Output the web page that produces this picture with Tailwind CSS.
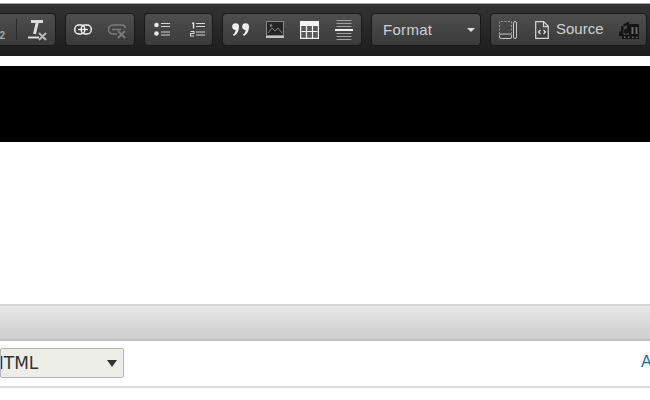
<!DOCTYPE html>
<html lang="en">
<head>
  <meta charset="UTF-8">
  <title>Editor</title>
  <script src="https://cdn.jsdelivr.net/npm/@tailwindcss/browser@4"></script>
</head>
<body class="w-[650px] h-[400px] overflow-hidden bg-white font-['Liberation_Sans',Arial,sans-serif]">
  <!-- toolbar -->
  <div class="mt-[3px] h-[53px] border-t border-[#a8a8a8] bg-gradient-to-b from-[#333333] to-[#1c1c1c] pt-[9px] pr-[3px] flex justify-end gap-[9px] overflow-hidden">
    <!-- subscript / clear format -->
    <div class="shrink-0 w-[120px] h-[33px] rounded-[4px] border border-[#181818] bg-gradient-to-b from-[#4e4e4e] to-[#3a3a3a] flex items-center justify-end pr-[8px]">
      <span class="mt-[13px] mr-[11px] text-[10px] leading-none font-bold text-[#a8a8a8]">2</span>
      <span class="w-px h-[21px] bg-[#2a2a2a] mr-[11px]"></span>
      <svg class="w-[19px] h-[22px]" viewBox="0 0 19 22" fill="none">
        <path d="M3 2.500h12M9.500 2.500 6.500 15" stroke="#dcdcdc" stroke-width="3"/>
        <path d="M0 18.500h11" stroke="#e8e8e8" stroke-width="1.800"/>
        <path d="M11 14l7 7M18 14l-7 7" stroke="#b8b8b8" stroke-width="2"/>
      </svg>
    </div>

    <!-- link / unlink -->
    <div class="shrink-0 w-[70px] h-[33px] rounded-[4px] border border-[#181818] bg-gradient-to-b from-[#4e4e4e] to-[#3a3a3a] flex items-start pt-[10px] pl-[8px] gap-[16px]">
      <svg class="w-[18px] h-[11px]" viewBox="0 0 18 11" fill="none" stroke="#f2f2f2" stroke-width="1.500">
        <rect x=".8" y="1" width="10" height="9" rx="4"/>
        <rect x="7.200" y="1" width="10" height="9" rx="4"/>
        <path d="M4 5.500h10" stroke-width="1.200"/>
      </svg>
      <svg class="w-[19px] h-[15px]" viewBox="0 0 19 15" fill="none" stroke="#7c7c7c" stroke-width="1.500">
        <path d="M9 10H5a4 4 0 0 1 0-9h9a4 4 0 0 1 3.500 3M4 5.500h9"/>
        <path d="M10 7l7 7M17 7l-7 7" stroke-width="1.800"/>
      </svg>
    </div>

    <!-- lists -->
    <div class="shrink-0 w-[69px] h-[33px] rounded-[4px] border border-[#181818] bg-gradient-to-b from-[#4e4e4e] to-[#3a3a3a] flex items-center pl-[9px] gap-[20px]">
      <svg class="w-[16px] h-[15px]" viewBox="0 0 16 15" fill="none">
        <circle cx="2.500" cy="3" r="2.300" fill="#e8e8e8"/>
        <circle cx="2.500" cy="11.500" r="2.300" fill="#e8e8e8"/>
        <path d="M7 1.500h9M7 4.500h9M7 10h9M7 13h9" stroke="#d4d4d4" stroke-width="1.200"/>
      </svg>
      <svg class="w-[15px] h-[15px]" viewBox="0 0 15 15" fill="none">
        <path d="M2 1.500 3.500 1v5.500" stroke="#e8e8e8" stroke-width="1.300"/>
        <path d="M.5 9.500h3.500v2H.5v2.500h3.500" stroke="#d8d8d8" stroke-width="1.100"/>
        <path d="M6 1.500h9M6 4.500h9M6 10h9M6 13h9" stroke="#d4d4d4" stroke-width="1.200"/>
      </svg>
    </div>

    <!-- blocks -->
    <div class="shrink-0 w-[140px] h-[33px] rounded-[4px] border border-[#181818] bg-gradient-to-b from-[#4e4e4e] to-[#3a3a3a] flex items-center pl-[9px]">
      <svg class="w-[18px] h-[13px] mr-[16px]" viewBox="0 0 18 13" fill="#f0f0f0">
        <circle cx="3.600" cy="3.600" r="3.400"/>
        <path d="M6.800 4C7 8 5 11.500 1.800 13l-.8-1.400c1.600-1 2.400-2.400 2.600-4.600z"/>
        <circle cx="13.600" cy="3.600" r="3.400"/>
        <path d="M16.800 4c.2 4-1.800 7.500-5 9l-.8-1.400c1.600-1 2.400-2.400 2.600-4.600z"/>
      </svg>
      <svg class="w-[18px] h-[17px] mr-[16px]" viewBox="0 0 18 17" fill="none">
        <rect x=".5" y=".5" width="17" height="14" fill="#262626" stroke="#8a8a8a"/>
        <path d="M2 12l4-5 3 3 3-3 4 5" stroke="#808080"/>
        <circle cx="5" cy="4.500" r="1.300" fill="#808080"/>
        <path d="M0 16h18" stroke="#f0f0f0" stroke-width="1.500"/>
      </svg>
      <svg class="w-[19px] h-[18px] mr-[16px]" viewBox="0 0 19 18" fill="none">
        <rect x="0" y="0" width="19" height="18" fill="#f2f2f2"/>
        <rect x="1.200" y="5" width="16.600" height="11.800" fill="#5a5a5a"/>
        <path d="M6.500 5v12M12.500 5v12M1.500 10.500h16" stroke="#f2f2f2" stroke-width="1.200"/>
      </svg>
      <svg class="w-[18px] h-[20px]" viewBox="0 0 18 20" fill="none">
        <path d="M1.500 .5h15M1.500 3.500h15M1.500 6.500h15M1.500 13.500h15M1.500 16.500h15M1.500 19.500h15" stroke="#a0a0a0"/>
        <path d="M0 10h18" stroke="#f2f2f2" stroke-width="2"/>
      </svg>
    </div>

    <!-- format combo -->
    <div class="shrink-0 w-[110px] h-[33px] rounded-[4px] border border-[#181818] bg-gradient-to-b from-[#4e4e4e] to-[#3a3a3a] flex items-center justify-between pl-[11px] pr-[5px]">
      <span class="mt-px text-[15px] tracking-[0.3px] text-[#d0d0d0]">Format</span>
      <span class="w-0 h-0 border-x-[4px] border-x-transparent border-t-[4px] border-t-[#e0e0e0]"></span>
    </div>

    <!-- misc -->
    <div class="shrink-0 w-[157px] h-[33px] rounded-[4px] border border-[#181818] bg-gradient-to-b from-[#4e4e4e] to-[#3a3a3a] flex items-center pl-[8px]">
      <svg class="w-[18px] h-[18px] mr-[18px]" viewBox="0 0 18 18" fill="none">
        <path d="M.5 13V.5h12v12" stroke="#9a9a9a" stroke-dasharray="2 1.500"/>
        <rect x=".5" y="13" width="12" height="4.500" rx="1.500" stroke="#c8c8c8"/>
        <rect x="14.500" y=".5" width="3" height="17" rx="1.500" stroke="#c8c8c8"/>
      </svg>
      <svg class="w-[14px] h-[18px] mr-[7px]" viewBox="0 0 14 18" fill="none">
        <path d="M.7.7h8l4.600 4.600v12H.7zM8.500.7v5h5" stroke="#d8d8d8" stroke-width="1.200"/>
        <path d="M5.500 9 3.500 11l2 2M8.500 9l2 2-2 2" stroke="#e8e8e8" stroke-width="1.200"/>
      </svg>
      <span class="text-[15px] text-[#d0d0d0] mr-[15px]">Source</span>
      <svg class="w-[20px] h-[18px]" viewBox="0 0 20 18" fill="#141414">
        <path d="M2 5h2.500v7.500a2.500 2.500 0 1 1-2.500-2.300z"/>
        <path d="M4.500 3 10 1v2.500L4.500 5.500z"/>
        <path d="M8 1h2v9a2.500 2.500 0 1 1-2-2.200z"/>
        <rect x="10" y="3" width="10" height="12" rx="1"/>
        <rect x="3" y="14" width="17" height="4"/>
        <path d="M12.500 6h2v7h-2zM16.500 6h2v7h-2z" fill="#6a6a6a"/>
        <path d="M5 15.500h1.500v1.500H5zM9 15.500h1.500v1.500H9zM13 15.500h1.500v1.500H13zM17 15.500h1.500v1.500H17z" fill="#6a6a6a"/>
      </svg>
    </div>
  </div>

  <!-- black banner -->
  <div class="h-[76px] mt-[10px] bg-black"></div>
  <div class="h-[162px]"></div>

  <!-- bottom bar -->
  <div class="h-[37px] border-t-2 border-[#d6d6d6] border-b-2 border-b-[#c2c2c2] bg-gradient-to-b from-[#e8e8e8] to-[#cecece]"></div>
  <div class="h-[47px] border-b-2 border-[#dedede] flex items-start justify-between pt-[7px]">
    <div class="w-[124px] h-[30px] border border-[#b4b4b4] rounded-[2px] bg-[#eeeee8] flex items-center justify-between pr-[6px] text-[17px] text-[#333333] font-['DejaVu_Sans',sans-serif] overflow-hidden">
      <span class="-ml-[10px] mt-px">HTML</span>
      <span class="w-0 h-0 border-x-[5px] border-x-transparent border-t-[7px] border-t-[#333333]"></span>
    </div>
    <a class="mt-[2px] text-[16px] text-[#0071b8] -mr-[1px] w-[10px]">A</a>
  </div>
</body>
</html>
